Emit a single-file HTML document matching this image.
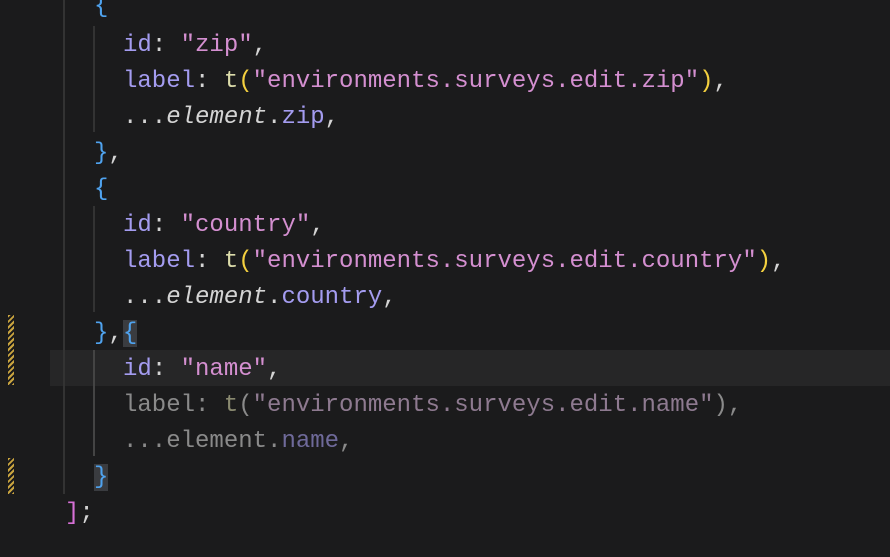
<!DOCTYPE html>
<html><head><style>
body{margin:0;width:890px;height:554px;background:#1b1b1c;overflow:hidden;position:relative;font-family:"Liberation Mono",monospace;font-size:24px;}
.l{position:absolute;left:0;height:36px;line-height:36px;white-space:pre;color:#cccccc}
.k{color:#a49cf0}.s{color:#d48fd0}.f{color:#dcdcaa}.p{color:#f4d03f}.b{color:#4fa3ef}.w{color:#d4d4d4}.pr{color:#a49cf0}
.d .k,.d .w{color:#8a8a8a}.d .s{color:#8e7a90}.d .f{color:#8a8a70}.d .pr{color:#6f6a9a}.d{color:#8a8a8a}
.g{position:absolute;width:2px;background:#333}
.hatch{position:absolute;left:8px;width:6px;background:repeating-linear-gradient(135deg,#c9a43f 0 2px,#1b1b1c 2px 4px)}
.m{background:#3a3c40}
#c{position:absolute;left:0;top:3px;width:890px;height:554px}
</style></head><body>
<div style="position:absolute;left:50px;top:350px;width:840px;height:36px;background:#262627"></div>
<div class="g" style="left:63px;top:0;height:494px"></div>
<div class="g" style="left:93px;top:26px;height:106px"></div>
<div class="g" style="left:93px;top:206px;height:106px"></div>
<div class="g" style="left:93px;top:350px;height:106px;background:#444"></div>
<div class="hatch" style="top:315px;height:70px"></div>
<div class="hatch" style="top:458px;height:36px"></div>
<div id="c">
<div class="l" style="top:-14px"><span style="padding-left:94px" class="b">{</span></div>
<div class="l" style="top:25px;left:123px"><span class="k">id</span><span class="w">: </span><span class="s">"zip"</span><span class="w">,</span></div>
<div class="l" style="top:61px;left:123px"><span class="k">label</span><span class="w">: </span><span class="f">t</span><span class="p">(</span><span class="s">"environments.surveys.edit.zip"</span><span class="p">)</span><span class="w">,</span></div>
<div class="l" style="top:97px;left:123px"><span class="w">...<i>element</i>.</span><span class="pr">zip</span><span class="w">,</span></div>
<div class="l" style="top:133px;left:94px"><span class="b">}</span><span class="w">,</span></div>
<div class="l" style="top:169px;left:94px"><span class="b">{</span></div>
<div class="l" style="top:205px;left:123px"><span class="k">id</span><span class="w">: </span><span class="s">"country"</span><span class="w">,</span></div>
<div class="l" style="top:241px;left:123px"><span class="k">label</span><span class="w">: </span><span class="f">t</span><span class="p">(</span><span class="s">"environments.surveys.edit.country"</span><span class="p">)</span><span class="w">,</span></div>
<div class="l" style="top:277px;left:123px"><span class="w">...<i>element</i>.</span><span class="pr">country</span><span class="w">,</span></div>
<div class="l" style="top:313px;left:94px"><span class="b">}</span><span class="w">,</span><span class="b m">{</span></div>
<div class="l" style="top:349px;left:123px"><span class="k">id</span><span class="w">: </span><span class="s">"name"</span><span class="w">,</span></div>
<div class="l d" style="top:385px;left:123px"><span class="w">label: </span><span class="f">t</span><span class="w">(</span><span class="s">"environments.surveys.edit.name"</span><span class="w">),</span></div>
<div class="l d" style="top:421px;left:123px"><span class="w">...element.</span><span class="pr">name</span><span class="w">,</span></div>
<div class="l" style="top:457px;left:94px"><span class="b m">}</span></div>
<div class="l" style="top:493px;left:65px"><span style="color:#d670d6">]</span><span class="w">;</span></div>
</div>
</body></html>
